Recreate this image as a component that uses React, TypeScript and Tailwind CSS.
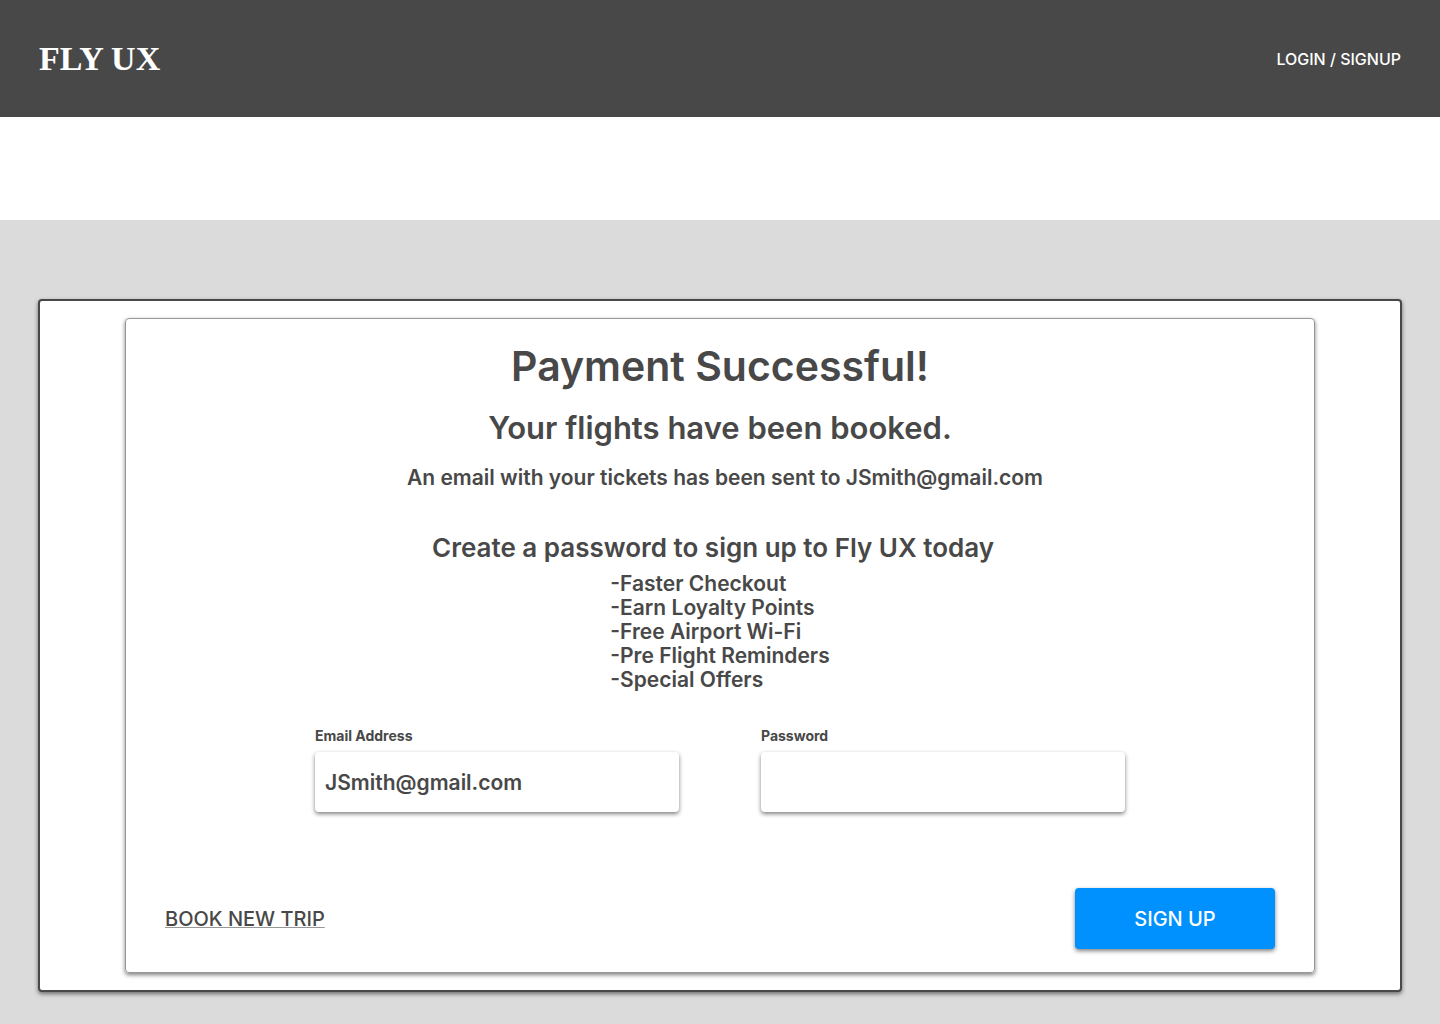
const benefits = [
  "Faster Checkout",
  "Earn Loyalty Points",
  "Free Airport Wi-Fi",
  "Pre Flight Reminders",
  "Special Offers",
];

const inputClass =
  "mt-2 h-15 w-full rounded-sm bg-white px-2.5 text-[21px] font-semibold text-[#484848] shadow-[0_2px_4px_rgba(0,0,0,0.5)] outline-none focus:ring-2 focus:ring-[#0091ff]";

export default function App() {
  return (
    <div className="flex min-h-screen flex-col bg-white font-[Inter,sans-serif] text-[#484848]">
      <header className="flex items-center justify-between bg-[#484848] px-[39px] py-10 text-white">
        <a href="#" className="font-['Liberation_Serif',serif] text-[34px] leading-[37px] font-bold">
          FLY UX
        </a>
        <a href="#" className="text-base font-medium">
          LOGIN / SIGNUP
        </a>
      </header>
      <main className="mt-[103px] grow bg-[#dbdbdb] px-[38px] pt-[79px] pb-8">
        <div className="rounded-sm border-2 border-[#484848] bg-white px-[85px] py-[17px] shadow-[0_2px_4px_rgba(0,0,0,0.5)]">
          <section className="flex flex-col items-center rounded-sm border border-[#979797] px-[39px] py-[23px] shadow-[0_2px_4px_rgba(0,0,0,0.5)]">
            <h1 className="text-[41px] leading-12 font-semibold">Payment Successful!</h1>
            <h2 className="mt-5 text-[31px] leading-9 font-semibold">Your flights have been booked.</h2>
            <p className="mt-5 ml-2.5 text-[21px] leading-6 font-semibold">
              An email with your tickets has been sent to JSmith@gmail.com
            </p>
            <h3 className="mt-10 mr-3.5 text-[26px] leading-9 font-semibold">
              Create a password to sign up to Fly UX today
            </h3>
            <ul className="mt-1.5 text-[21px] leading-6 font-semibold">
              {benefits.map((item) => (
                <li key={item}>-{item}</li>
              ))}
            </ul>
            <form className="mt-9 w-full">
              <div className="mx-auto grid max-w-[810px] grid-cols-2 gap-[82px]">
                <label className="text-sm leading-4 font-bold">
                  Email Address
                  <input type="email" defaultValue="JSmith@gmail.com" className={inputClass} />
                </label>
                <label className="text-sm leading-4 font-bold">
                  Password
                  <input type="password" className={inputClass} />
                </label>
              </div>
              <div className="mt-19 flex items-center justify-between">
                <a
                  href="#"
                  className="text-xl font-medium underline decoration-[#979797] decoration-1 underline-offset-1"
                >
                  BOOK NEW TRIP
                </a>
                <button className="h-[61px] w-50 rounded-sm bg-[#0091ff] text-xl font-medium text-white shadow-[0_2px_4px_rgba(0,0,0,0.5)]">
                  SIGN UP
                </button>
              </div>
            </form>
          </section>
        </div>
      </main>
    </div>
  );
}
